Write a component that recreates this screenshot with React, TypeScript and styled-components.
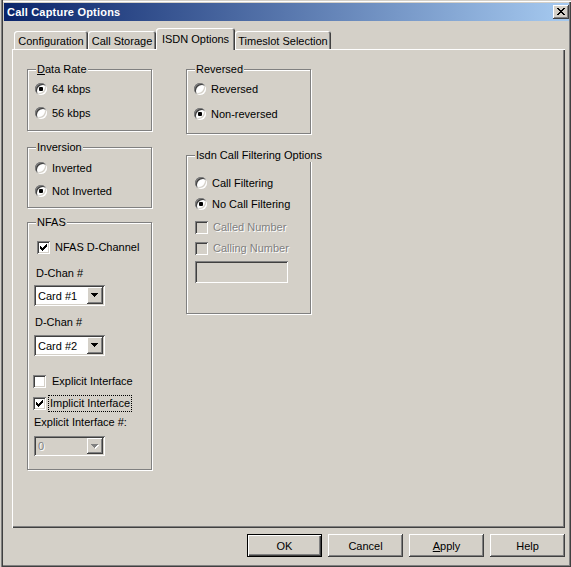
import React from 'react';
import styled, { createGlobalStyle, css } from 'styled-components';

const FACE = '#d4d0c8';

const GlobalStyle = createGlobalStyle`
  html, body { margin: 0; padding: 0; background: ${FACE}; }
  body { font-family: "Liberation Sans", Arial, sans-serif; font-size: 11px; color: #000; }
  * { box-sizing: border-box; }
`;

const raised = css`
  background: ${FACE};
  box-shadow: inset -1px -1px #404040, inset 1px 1px #fff, inset -2px -2px #808080;
`;

const sunken = css`
  box-shadow: inset 1px 1px #808080, inset -1px -1px #fff, inset 2px 2px #404040, inset -2px -2px ${FACE};
`;

const Window = styled.div`
  width: 571px;
  height: 567px;
  background: ${FACE};
  padding: 3px 2px 0 4px;
  display: flex;
  flex-direction: column;
  box-shadow: inset 1px 0 ${FACE}, inset 2px 0 #808080, inset 3px 0 #404040, inset 0 1px ${FACE},
    inset 0 2px #fff, inset -1px -1px #404040, inset -2px -2px #808080;
`;

const TitleBar = styled.div`
  height: 18px;
  display: flex;
  align-items: center;
  justify-content: space-between;
  padding-left: 3px;
  background: linear-gradient(to right, #0a246a, #a6caf0);
`;

const TitleText = styled.span`
  color: #fff;
  font-weight: bold;
  font-size: 11px;
  letter-spacing: 0.2px;
`;

const CloseButton = styled.div`
  ${raised};
  width: 16px;
  height: 14px;
  display: flex;
  align-items: center;
  justify-content: center;
  padding-bottom: 1px;
`;

const Content = styled.div`
  margin: 7px 0 0 8px;
  width: 553px;
  display: flex;
  flex-direction: column;
`;

const TabRow = styled.div`
  position: relative;
  z-index: 1;
  height: 21px;
  display: flex;
  align-items: flex-end;
  padding-left: 2px;
`;

const Tab = styled.div<{ $w: number; $active?: boolean }>`
  width: ${p => p.$w}px;
  height: ${p => (p.$active ? 22 : 18)}px;
  margin-bottom: ${p => (p.$active ? -1 : 0)}px;
  padding-top: ${p => (p.$active ? 0 : 2)}px;
  display: flex;
  align-items: center;
  justify-content: center;
  background: ${FACE};
  border-radius: 3px 3px 0 0;
  white-space: nowrap;
  box-shadow: inset 1px 1px #fff, inset -1px 0 #404040, inset -2px 0 #808080;
`;

const Panel = styled.div`
  height: 479px;
  padding: 20px 0 0 15px;
  display: flex;
  align-items: flex-start;
  gap: 34px;
  box-shadow: inset 1px 1px #fff, inset -1px -1px #404040, inset -2px -2px #808080;
`;

const Column = styled.div`
  width: 125px;
  display: flex;
  flex-direction: column;
`;

const Group = styled.div<{ $h: number; $mt?: number; $pt: number; $pl?: number; $gap?: number }>`
  position: relative;
  height: ${p => p.$h}px;
  margin-top: ${p => p.$mt ?? 0}px;
  padding: ${p => p.$pt}px 0 0 ${p => p.$pl ?? 7}px;
  border: 1px solid #808080;
  box-shadow: inset 1px 1px #fff, 1px 1px #fff;
  display: flex;
  flex-direction: column;
  gap: ${p => p.$gap ?? 0}px;
`;

const Legend = styled.span`
  position: absolute;
  top: -8px;
  left: 8px;
  padding: 0 1px;
  line-height: 14px;
  background: ${FACE};
  white-space: nowrap;
`;

const OptionRow = styled.div<{ $mt?: number; $ml?: number; $disabled?: boolean }>`
  display: flex;
  align-items: center;
  height: 16px;
  gap: 5px;
  margin-top: ${p => p.$mt ?? 0}px;
  margin-left: ${p => p.$ml ?? 0}px;
  white-space: nowrap;
  color: ${p => (p.$disabled ? '#808080' : '#000')};
  text-shadow: ${p => (p.$disabled ? '1px 1px #fff' : 'none')};
`;

const RadioCircle = styled.span<{ $checked?: boolean }>`
  position: relative;
  flex: none;
  width: 12px;
  height: 12px;
  border-radius: 50%;
  background: #fff;
  ${sunken};
  &::after {
    content: '';
    display: ${p => (p.$checked ? 'block' : 'none')};
    position: absolute;
    left: 4px;
    top: 4px;
    width: 4px;
    height: 4px;
    border-radius: 1px;
    background: #000;
  }
`;

const CheckBox = styled.span<{ $disabled?: boolean }>`
  flex: none;
  width: 13px;
  height: 13px;
  display: flex;
  background: ${p => (p.$disabled ? FACE : '#fff')};
  ${sunken};
`;

const FocusLabel = styled.span`
  outline: 1px dotted #000;
  outline-offset: 1px;
  margin-left: -1px;
  line-height: 13px;
`;

const PlainLabel = styled.span<{ $ml?: number }>`
  margin-left: ${p => p.$ml ?? 0}px;
`;

const FieldLabel = styled.div<{ $mt: number; $ml?: number }>`
  margin-top: ${p => p.$mt}px;
  margin-left: ${p => p.$ml ?? 0}px;
  line-height: 14px;
  white-space: nowrap;
`;

const Combo = styled.div<{ $mt: number; $h: number; $disabled?: boolean }>`
  margin-top: ${p => p.$mt}px;
  width: 71px;
  height: ${p => p.$h}px;
  padding: 2px;
  display: flex;
  background: ${p => (p.$disabled ? FACE : '#fff')};
  ${sunken};
`;

const ComboValue = styled.span<{ $disabled?: boolean }>`
  flex: 1;
  display: flex;
  align-items: center;
  padding-left: 2px;
  color: ${p => (p.$disabled ? '#808080' : '#000')};
  text-shadow: ${p => (p.$disabled ? '1px 1px #fff' : 'none')};
`;

const ComboButton = styled.span`
  ${raised};
  width: 16px;
  height: 100%;
  display: flex;
  align-items: center;
  justify-content: center;
`;

const TextField = styled.div`
  width: 93px;
  height: 22px;
  background: ${FACE};
  ${sunken};
`;

const ButtonRow = styled.div`
  margin-top: 6px;
  display: flex;
  justify-content: flex-end;
  gap: 6px;
`;

const Button = styled.button<{ $default?: boolean }>`
  width: 75px;
  height: 23px;
  border: none;
  padding: 0;
  margin: 0;
  background: ${FACE};
  font-family: inherit;
  font-size: 11px;
  color: #000;
  box-shadow: ${p =>
    p.$default
      ? 'inset 0 0 0 1px #000, inset 2px 2px #fff, inset -2px -2px #404040, inset -3px -3px #808080'
      : 'inset -1px -1px #404040, inset 1px 1px #fff, inset -2px -2px #808080'};
`;

const CHECK =
  'M9 3h1v1h-1zM8 4h2v1h-2zM3 5h1v1h-1zM7 5h3v1h-3zM3 6h2v1h-2zM6 6h3v1h-3zM3 7h5v1h-5zM4 8h3v1h-3zM5 9h1v1h-1z';

const Check = ({ checked, disabled }: { checked?: boolean; disabled?: boolean }) => (
  <CheckBox $disabled={disabled}>
    {checked && (
      <svg width="13" height="13" viewBox="0 0 13 13" shapeRendering="crispEdges">
        <path d={CHECK} fill="#000" />
      </svg>
    )}
  </CheckBox>
);

const Arrow = ({ disabled }: { disabled?: boolean }) => (
  <svg width="8" height="5" viewBox="0 0 8 5" shapeRendering="crispEdges">
    {disabled && <path d="M1 1h7v1h-7zM2 2h5v1h-5zM3 3h3v1h-3zM4 4h1v1h-1z" fill="#fff" />}
    <path d="M0 0h7v1h-7zM1 1h5v1h-5zM2 2h3v1h-3zM3 3h1v1h-1z" fill={disabled ? '#808080' : '#000'} />
  </svg>
);

const Radio = ({ label, checked }: { label: string; checked?: boolean }) => (
  <OptionRow>
    <RadioCircle $checked={checked} />
    <span>{label}</span>
  </OptionRow>
);

export default function App() {
  return (
    <>
      <GlobalStyle />
      <Window>
        <TitleBar>
          <TitleText>Call Capture Options</TitleText>
          <CloseButton>
            <svg width="8" height="7" viewBox="0 0 8 7" shapeRendering="crispEdges">
              <path
                d="M0 0h2v1h-2zM6 0h2v1h-2zM1 1h2v1h-2zM5 1h2v1h-2zM2 2h4v1h-4zM3 3h2v1h-2zM2 4h4v1h-4zM1 5h2v1h-2zM5 5h2v1h-2zM0 6h2v1h-2zM6 6h2v1h-2z"
                fill="#000"
              />
            </svg>
          </CloseButton>
        </TitleBar>
        <Content>
          <TabRow>
            <Tab $w={74}>Configuration</Tab>
            <Tab $w={68}>Call Storage</Tab>
            <Tab $w={79} $active>
              ISDN Options
            </Tab>
            <Tab $w={96}>Timeslot Selection</Tab>
          </TabRow>
          <Panel>
            <Column>
              <Group $h={62} $pt={11} $gap={8}>
                <Legend>
                  <u>D</u>ata Rate
                </Legend>
                <Radio label="64 kbps" checked />
                <Radio label="56 kbps" />
              </Group>
              <Group $h={61} $mt={16} $pt={12} $gap={7}>
                <Legend>Inversion</Legend>
                <Radio label="Inverted" />
                <Radio label="Not Inverted" checked />
              </Group>
              <Group $h={248} $mt={14} $pt={16} $pl={6}>
                <Legend>NFAS</Legend>
                <OptionRow $ml={3}>
                  <Check checked />
                  <span>NFAS D-Channel</span>
                </OptionRow>
                <FieldLabel $mt={11} $ml={2}>D-Chan #</FieldLabel>
                <Combo $mt={5} $h={21}>
                  <ComboValue>Card #1</ComboValue>
                  <ComboButton>
                    <Arrow />
                  </ComboButton>
                </Combo>
                <FieldLabel $mt={9} $ml={1}>D-Chan #</FieldLabel>
                <Combo $mt={6} $h={21}>
                  <ComboValue>Card #2</ComboValue>
                  <ComboButton>
                    <Arrow />
                  </ComboButton>
                </Combo>
                <OptionRow $mt={17} $ml={-1}>
                  <Check />
                  <PlainLabel $ml={1}>Explicit Interface</PlainLabel>
                </OptionRow>
                <OptionRow $mt={6} $ml={-1}>
                  <Check checked />
                  <FocusLabel>Implicit Interface</FocusLabel>
                </OptionRow>
                <FieldLabel $mt={4}>Explicit Interface #:</FieldLabel>
                <Combo $mt={7} $h={20} $disabled>
                  <ComboValue $disabled>0</ComboValue>
                  <ComboButton>
                    <Arrow disabled />
                  </ComboButton>
                </Combo>
              </Group>
            </Column>
            <Column>
              <Group $h={65} $pt={11} $gap={9}>
                <Legend>Reversed</Legend>
                <Radio label="Reversed" />
                <Radio label="Non-reversed" checked />
              </Group>
              <Group $h={159} $mt={21} $pt={19} $pl={8} $gap={5}>
                <Legend>Isdn Call Filtering Options</Legend>
                <Radio label="Call Filtering" />
                <Radio label="No Call Filtering" checked />
                <OptionRow $mt={2} $disabled>
                  <Check disabled />
                  <span>Called Number</span>
                </OptionRow>
                <OptionRow $disabled>
                  <Check disabled />
                  <span>Calling Number</span>
                </OptionRow>
                <TextField />
              </Group>
            </Column>
          </Panel>
          <ButtonRow>
            <Button $default>OK</Button>
            <Button>Cancel</Button>
            <Button>
              <u>A</u>pply
            </Button>
            <Button>Help</Button>
          </ButtonRow>
        </Content>
      </Window>
    </>
  );
}
